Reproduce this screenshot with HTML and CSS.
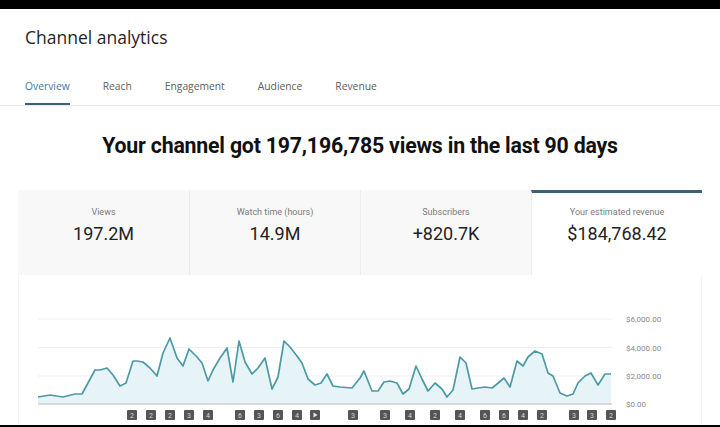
FILE: index.html
```html
<!DOCTYPE html>
<html>
<head>
  <title>Channel analytics</title>
  <link rel="stylesheet" href="styles.css">
</head>
<body>
  <div class="frame">
    <div class="bar-top"></div>
    <main class="page">
      <h1 class="title">Channel analytics</h1>
      <nav class="tabs">
        <span class="tab active">Overview</span>
        <span class="tab">Reach</span>
        <span class="tab">Engagement</span>
        <span class="tab">Audience</span>
        <span class="tab">Revenue</span>
      </nav>

      <h2 class="headline">Your channel got 197,196,785 views in the last 90 days</h2>

      <section class="metrics">
        <div class="metric">
          <div class="metric-label">Views</div>
          <div class="metric-value">197.2M</div>
        </div>
        <div class="metric">
          <div class="metric-label">Watch time (hours)</div>
          <div class="metric-value">14.9M</div>
        </div>
        <div class="metric">
          <div class="metric-label">Subscribers</div>
          <div class="metric-value">+820.7K</div>
        </div>
        <div class="metric selected">
          <div class="metric-label">Your estimated revenue</div>
          <div class="metric-value">$184,768.42</div>
        </div>
      </section>

      <section class="chart">
        <svg class="chart-svg" viewBox="18 275 684 149" width="684" height="149">
          <!-- grid -->
          <line class="grid" x1="38" y1="319" x2="612" y2="319"/>
          <line class="grid" x1="38" y1="347.5" x2="612" y2="347.5"/>
          <line class="grid" x1="38" y1="376" x2="612" y2="376"/>

          <polygon class="area" points="38,404 38,397 50,395 63,397 75,394 82,394 95,370 100,370 107,368 113,375 120,386 126,383 133,361 137,361 143,362 150,368 157,376 163,353 170,338 177,358 183,366 189,349 197,357 202,363 208,381 213,370 220,358 227,348 233,382 239,341 245,362 252,374 258,368 265,358 272,389 278,377 284,341 290,347 297,356 302,363 308,379 315,385 321,383 327,374 333,386 340,387 352,388 360,378 364,371 372,391 378,391 384,382 390,381 397,383 403,394 409,389 416,366 422,379 428,391 435,383 442,389 447,397 453,390 460,357 466,363 472,389 478,388 485,387 492,388 497,384 504,378 510,387 517,361 523,366 528,357 535,351 542,354 548,373 553,376 560,393 567,396 573,394 578,383 585,376 591,373 598,385 605,374 611,374 611,404"/>
          <line class="baseline" x1="38" y1="404" x2="612" y2="404"/>
          <polyline class="line" points="38,397 50,395 63,397 75,394 82,394 95,370 100,370 107,368 113,375 120,386 126,383 133,361 137,361 143,362 150,368 157,376 163,353 170,338 177,358 183,366 189,349 197,357 202,363 208,381 213,370 220,358 227,348 233,382 239,341 245,362 252,374 258,368 265,358 272,389 278,377 284,341 290,347 297,356 302,363 308,379 315,385 321,383 327,374 333,386 340,387 352,388 360,378 364,371 372,391 378,391 384,382 390,381 397,383 403,394 409,389 416,366 422,379 428,391 435,383 442,389 447,397 453,390 460,357 466,363 472,389 478,388 485,387 492,388 497,384 504,378 510,387 517,361 523,366 528,357 535,351 542,354 548,373 553,376 560,393 567,396 573,394 578,383 585,376 591,373 598,385 605,374 611,374"/>

          <!-- y axis -->
          <text class="axis" x="626" y="322">$6,000.00</text>
          <text class="axis" x="626" y="350.5">$4,000.00</text>
          <text class="axis" x="626" y="379">$2,000.00</text>
          <text class="axis" x="626" y="407">$0.00</text>

          <!-- video markers -->
          <g class="marker" transform="translate(127 410)"><rect width="10" height="10" rx="1"/><text x="5" y="7.5">2</text></g>
          <g class="marker" transform="translate(146 410)"><rect width="10" height="10" rx="1"/><text x="5" y="7.5">2</text></g>
          <g class="marker" transform="translate(165 410)"><rect width="10" height="10" rx="1"/><text x="5" y="7.5">2</text></g>
          <g class="marker" transform="translate(184 410)"><rect width="10" height="10" rx="1"/><text x="5" y="7.5">3</text></g>
          <g class="marker" transform="translate(203 410)"><rect width="10" height="10" rx="1"/><text x="5" y="7.5">4</text></g>
          <g class="marker" transform="translate(235 410)"><rect width="10" height="10" rx="1"/><text x="5" y="7.5">6</text></g>
          <g class="marker" transform="translate(254 410)"><rect width="10" height="10" rx="1"/><text x="5" y="7.5">3</text></g>
          <g class="marker" transform="translate(273 410)"><rect width="10" height="10" rx="1"/><text x="5" y="7.5">6</text></g>
          <g class="marker" transform="translate(292 410)"><rect width="10" height="10" rx="1"/><text x="5" y="7.5">4</text></g>
          <g class="marker" transform="translate(310 410)"><rect width="10" height="10" rx="1"/><path class="play" d="M3.5 2.5 L7.5 5 L3.5 7.5 Z"/></g>
          <g class="marker" transform="translate(348 410)"><rect width="10" height="10" rx="1"/><text x="5" y="7.5">3</text></g>
          <g class="marker" transform="translate(380 410)"><rect width="10" height="10" rx="1"/><text x="5" y="7.5">3</text></g>
          <g class="marker" transform="translate(405 410)"><rect width="10" height="10" rx="1"/><text x="5" y="7.5">4</text></g>
          <g class="marker" transform="translate(430 410)"><rect width="10" height="10" rx="1"/><text x="5" y="7.5">2</text></g>
          <g class="marker" transform="translate(455 410)"><rect width="10" height="10" rx="1"/><text x="5" y="7.5">4</text></g>
          <g class="marker" transform="translate(480 410)"><rect width="10" height="10" rx="1"/><text x="5" y="7.5">6</text></g>
          <g class="marker" transform="translate(499 410)"><rect width="10" height="10" rx="1"/><text x="5" y="7.5">6</text></g>
          <g class="marker" transform="translate(518 410)"><rect width="10" height="10" rx="1"/><text x="5" y="7.5">4</text></g>
          <g class="marker" transform="translate(537 410)"><rect width="10" height="10" rx="1"/><text x="5" y="7.5">2</text></g>
          <g class="marker" transform="translate(569 410)"><rect width="10" height="10" rx="1"/><text x="5" y="7.5">3</text></g>
          <g class="marker" transform="translate(587 410)"><rect width="10" height="10" rx="1"/><text x="5" y="7.5">3</text></g>
          <g class="marker" transform="translate(606 410)"><rect width="10" height="10" rx="1"/><text x="5" y="7.5">2</text></g>
        </svg>
      </section>
    </main>
    <div class="bar-bottom"></div>
  </div>
</body>
</html>
```

FILE: styles.css
```css
body {
  margin: 0;
  font-family: Roboto, "Liberation Sans", sans-serif;
  background: #000;
}
.frame {
  width: 720px;
  height: 427px;
  display: flex;
  flex-direction: column;
  overflow: hidden;
}
.bar-top {
  height: 9px;
  background: #000;
}
.bar-bottom {
  height: 2px;
  background: #000;
}
.page {
  flex: 1;
  background: #fff;
  overflow: hidden;
}

/* Header */
.title {
  margin: 0;
  padding: 16px 0 0 25px;
  font-family: "Open Sans", sans-serif;
  font-size: 17.5px;
  font-weight: 400;
  line-height: 24px;
  color: #1f1f1f;
}
.tabs {
  display: flex;
  gap: 33px;
  margin-top: 29px;
  padding: 0 25px;
  border-bottom: 1px solid #e8e8e8;
}
.tab {
  padding-bottom: 9px;
  border-bottom: 2px solid transparent;
  font-family: "Open Sans", sans-serif;
  font-size: 10.3px;
  line-height: 16px;
  color: #606060;
}
.tab.active {
  color: #3d7aa0;
  border-bottom-color: #3e5f78;
}

.headline {
  margin: 27px 0 0;
  text-align: center;
  font-size: 21.3px;
  font-weight: 700;
  line-height: 26px;
  color: #111;
  letter-spacing: -0.2px;
}

/* Metric cards */
.metrics {
  display: grid;
  grid-template-columns: repeat(4, 171px);
  height: 85px;
  margin: 31px 18px 0;
}
.metric {
  padding-top: 16px;
  background: #f8f8f8;
  border-left: 1px solid #ececec;
  text-align: center;
}
.metric:first-child {
  border-left: none;
}
.metric.selected {
  padding-top: 13px;
  background: #fff;
  border-top: 3px solid #3e5f78;
}
.metric-label {
  font-size: 9px;
  line-height: 12px;
  color: #7a7a7a;
}
.metric-value {
  margin-top: 5px;
  font-size: 18px;
  line-height: 22px;
  color: #222;
}

/* Chart */
.chart {
  margin: 0 18px;
  height: 149px;
  border-left: 1px solid #f4f4f4;
  border-right: 1px solid #f4f4f4;
  box-sizing: border-box;
}
.chart-svg {
  display: block;
  margin-left: -1px;
}
.grid {
  stroke: #efefef;
  stroke-width: 1;
}
.baseline {
  stroke: #cfcfcf;
  stroke-width: 1.5;
}
.area {
  fill: #e6f3f7;
}
.line {
  fill: none;
  stroke: #4c9aa6;
  stroke-width: 1.7;
  stroke-linejoin: round;
}
.axis {
  font-size: 8px;
  fill: #8a8a8a;
}
.marker rect {
  fill: #555;
}
.marker text {
  font-size: 7px;
  fill: #d8d8d8;
  text-anchor: middle;
}
.marker .play {
  fill: #eee;
}
```
